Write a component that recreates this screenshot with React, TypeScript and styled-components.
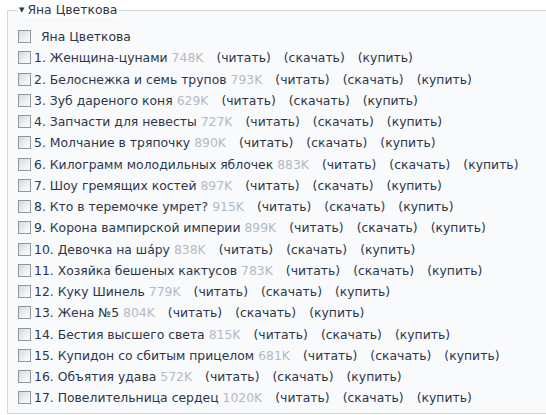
import styled, { createGlobalStyle } from "styled-components";

const GlobalStyle = createGlobalStyle`
  body {
    margin: 0;
    background: #ffffff;
    overflow: hidden;
    font-family: "DejaVu Sans", Verdana, sans-serif;
  }
`;

const books: { title: string; size: string }[] = [
  { title: "Женщина-цунами", size: "748K" },
  { title: "Белоснежка и семь трупов", size: "793K" },
  { title: "Зуб дареного коня", size: "629K" },
  { title: "Запчасти для невесты", size: "727K" },
  { title: "Молчание в тряпочку", size: "890K" },
  { title: "Килограмм молодильных яблочек", size: "883K" },
  { title: "Шоу гремящих костей", size: "897K" },
  { title: "Кто в теремочке умрет?", size: "915K" },
  { title: "Корона вампирской империи", size: "899K" },
  { title: "Девочка на шáру", size: "838K" },
  { title: "Хозяйка бешеных кактусов", size: "783K" },
  { title: "Куку Шинель", size: "779K" },
  { title: "Жена №5", size: "804K" },
  { title: "Бестия высшего света", size: "815K" },
  { title: "Купидон со сбитым прицелом", size: "681K" },
  { title: "Объятия удава", size: "572K" },
  { title: "Повелительница сердец", size: "1020K" },
];

const App = () => (
  <>
    <GlobalStyle />
    <Page>
      <Fieldset>
        <Legend>
          <Arrow>▼</Arrow>Яна Цветкова
        </Legend>
        <Row>
          <Box />
          <AuthorName>Яна Цветкова</AuthorName>
        </Row>
        {books.map((b, i) => (
          <Row key={b.title}>
            <Box />
            <Title>
              {i + 1}. {b.title}
            </Title>
            <Size>{b.size}</Size>
            <Action>(читать)</Action>
            <Action>(скачать)</Action>
            <Action>(купить)</Action>
          </Row>
        ))}
      </Fieldset>
    </Page>
  </>
);

export default App;

const Page = styled.div`
  width: 546px;
  height: 415px;
  overflow: hidden;
  padding: 3px 0 0 7px;
  box-sizing: border-box;
`;

const Fieldset = styled.fieldset`
  height: 411px;
  box-sizing: border-box;
  margin: 0 -20px 0 0;
  padding: 9px 0 0 10px;
  border: 1px solid #d4d7dc;
  border-right: none;
  background: #f9fafc;
  color: #2d3648;
  font-size: 12.4px;
`;

const Legend = styled.legend`
  padding: 0 2px 0 1px;
  margin-left: 0;
  color: #2d3648;
  font-size: 12.4px;
  line-height: 14px;
  background: #ffffff;
`;

const Arrow = styled.span`
  font-size: 7px;
  margin-right: 3px;
  vertical-align: 2px;
`;

const Row = styled.div`
  display: flex;
  align-items: center;
  height: 21.25px;
  white-space: nowrap;
`;

const Box = styled.span`
  width: 11px;
  height: 11px;
  flex: none;
  border: 1px solid #8e969e;
  background: linear-gradient(135deg, #d6d9dd 0%, #eef0f2 60%, #fbfbfc 100%);
  margin-right: 3px;
`;

const AuthorName = styled.span`
  margin-left: 7px;
`;

const Title = styled.span``;

const Size = styled.span`
  color: #b4bac2;
  margin-left: 4px;
`;

const Action = styled.span`
  margin-left: 13px;
  &:first-of-type {
    margin-left: 18px;
  }
`;
